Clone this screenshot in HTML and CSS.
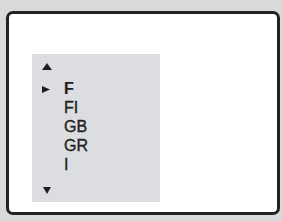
FILE: index.html
```html
<!DOCTYPE html>
<html lang="en">
<head>
    <meta charset="UTF-8">
    <title>Country list</title>
    <link rel="stylesheet" href="styles.css">
</head>
<body>
    <div class="screen">
        <div class="menu">
            <svg class="arrow arrow-up" width="10" height="7" viewBox="0 0 10 7"><polygon points="0,7 10,7 5,0" fill="#1e1e1e"/></svg>
            <ul class="list">
                <li class="item current">
                    <span class="mark"><svg width="8" height="7" viewBox="0 0 8 7"><polygon points="0,0 8,3.5 0,7" fill="#1e1e1e"/></svg></span>
                    <span class="label">F</span>
                </li>
                <li class="item"><span class="mark"></span><span class="label">FI</span></li>
                <li class="item"><span class="mark"></span><span class="label">GB</span></li>
                <li class="item"><span class="mark"></span><span class="label">GR</span></li>
                <li class="item"><span class="mark"></span><span class="label">I</span></li>
            </ul>
            <svg class="arrow arrow-down" width="8" height="7" viewBox="0 0 8 7"><polygon points="0,0 8,0 4,7" fill="#1e1e1e"/></svg>
        </div>
    </div>
</body>
</html>
```

FILE: styles.css
```css
html, body {
    margin: 0;
    height: 100%;
}

body {
    background-color: #d9d9d9;
    padding: 11px 2px 6px 6px;
    box-sizing: border-box;
    font-family: "Liberation Sans", Arial, sans-serif;
    color: #1e1e1e;
}

/* 外框 */
.screen {
    width: 274px;
    height: 204px;
    box-sizing: border-box;
    border: 3px solid #222;
    border-radius: 7px;
    background-color: #fff;
    padding: 40px 0 0 23px;
}

/* 灰色菜单 */
.menu {
    width: 128px;
    height: 148px;
    box-sizing: border-box;
    background-color: #dcdde0;
    padding: 9px 0 0 10px;
    display: flex;
    flex-direction: column;
}

.arrow {
    display: block;
}

.arrow-up {
    margin-bottom: 9px;
}

.arrow-down {
    margin-top: 13px;
    margin-left: 1px;
}

.list {
    list-style: none;
    margin: 0;
    padding: 0;
}

.item {
    display: flex;
    height: 19px;
    line-height: 19px;
    font-size: 16px;
    -webkit-text-stroke: 0.35px #1e1e1e;
}

.mark {
    width: 22px;
    display: flex;
    align-items: center;
    padding-top: 2px;
}

.mark svg {
    display: block;
}

.current .label {
    font-weight: bold;
    -webkit-text-stroke: 0.2px #1e1e1e;
}
```
